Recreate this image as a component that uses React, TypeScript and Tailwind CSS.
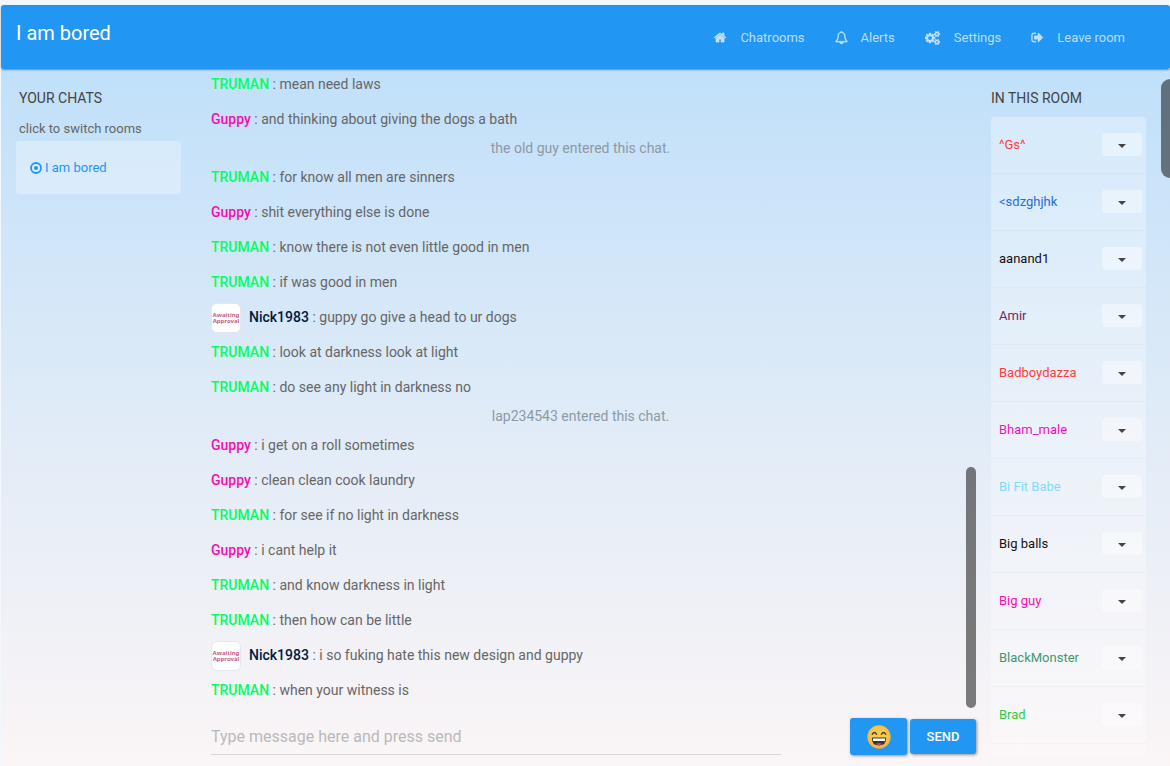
import type { ReactNode } from 'react';

type Message = { user?: 'TRUMAN' | 'Guppy' | 'Nick1983'; text: string };

const messages: Message[] = [
  { user: 'TRUMAN', text: 'mean need laws' },
  { user: 'Guppy', text: 'and thinking about giving the dogs a bath' },
  { text: 'the old guy entered this chat.' },
  { user: 'TRUMAN', text: 'for know all men are sinners' },
  { user: 'Guppy', text: 'shit everything else is done' },
  { user: 'TRUMAN', text: 'know there is not even little good in men' },
  { user: 'TRUMAN', text: 'if was good in men' },
  { user: 'Nick1983', text: 'guppy go give a head to ur dogs' },
  { user: 'TRUMAN', text: 'look at darkness look at light' },
  { user: 'TRUMAN', text: 'do see any light in darkness no' },
  { text: 'lap234543 entered this chat.' },
  { user: 'Guppy', text: 'i get on a roll sometimes' },
  { user: 'Guppy', text: 'clean clean cook laundry' },
  { user: 'TRUMAN', text: 'for see if no light in darkness' },
  { user: 'Guppy', text: 'i cant help it' },
  { user: 'TRUMAN', text: 'and know darkness in light' },
  { user: 'TRUMAN', text: 'then how can be little' },
  { user: 'Nick1983', text: 'i so fuking hate this new design and guppy' },
  { user: 'TRUMAN', text: 'when your witness is' },
];

const nameColors = {
  TRUMAN: 'text-[#00ff66]',
  Guppy: 'text-[#f80bb0]',
  Nick1983: 'text-[#001a40]',
};

const people = [
  { name: '^Gs^', color: 'text-[#ff3b3b]' },
  { name: '<sdzghjhk', color: 'text-[#1f6fd6]' },
  { name: 'aanand1', color: 'text-[#111111]' },
  { name: 'Amir', color: 'text-[#7a1f5c]' },
  { name: 'Badboydazza', color: 'text-[#ff3b3b]' },
  { name: 'Bham_male', color: 'text-[#f012be]' },
  { name: 'Bi Fit Babe', color: 'text-[#7fdbff]' },
  { name: 'Big balls', color: 'text-[#111111]' },
  { name: 'Big guy', color: 'text-[#f80bb0]' },
  { name: 'BlackMonster', color: 'text-[#3d9970]' },
  { name: 'Brad', color: 'text-[#2ecc40]' },
  { name: '', color: '' },
];

const smallCog =
  'v140q0 16-149 31-12 27-30 52 51 113 51 138 0 4-4 7-122 71-124 71-8 0-46-47t-52-68q-20 2-30 2t-30-2q-14 21-52 68t-46 47q-2 0-124-71-4-3-4-7 0-25 51-138-18-25-30-52-149-15-149-31v-140q0-16 149-31 13-29 30-52-51-113-51-138 0-4 4-7 4-2 35-20t59-34 30-16q8 0 46 46.5t52 67.5q20-2 30-2t30 2q51-71 92-112l6-2q4 0 124 70 4 3 4 7 0 25-51 138 17 23 30 52 149 15 149 31z';

const icons = {
  home: 'M1408 992v480q0 26-19 45t-45 19h-384v-384h-256v384h-384q-26 0-45-19t-19-45v-480q0-1 .5-3t.5-3l575-474 575 474q1 2 1 6zm223-69l-62 74q-8 9-21 11h-3q-13 0-21-7l-692-577-692 577q-12 8-24 7-13-2-21-11l-62-74q-8-10-7-23.5t11-21.5l719-599q32-26 76-26t76 26l244 204v-195q0-14 9-23t23-9h192q14 0 23 9t9 23v408l219 182q10 8 11 21.5t-7 23.5z',
  bell: 'M912 1696q0-16-16-16-59 0-101.5-42.5t-42.5-101.5q0-16-16-16t-16 16q0 73 51.5 124.5t124.5 51.5q16 0 16-16zm-666-288h1300q-266-300-266-832 0-51-24-105t-69-103-121.5-80.5-169.5-31.5-169.5 31.5-121.5 80.5-69 103-24 105q0 532-266 832zm1482 0q0 52-38 90t-90 38h-448q0 106-75 181t-181 75-181-75-75-181h-448q-52 0-90-38t-38-90q50-42 91-88t85-119.5 74.5-158.5 50-206 19.5-260q0-152 117-282.5t307-158.5q-8-19-8-39 0-40 28-68t68-28 68 28 28 68q0 20-8 39 190 28 307 158.5t117 282.5q0 139 19.5 260t50 206 74.5 158.5 85 119.5 91 88z',
  cogs:
    'M832 896q0-106-75-181t-181-75-181 75-75 181 75 181 181 75 181-75 75-181zm768 512q0-52-38-90t-90-38-90 38-38 90q0 53 37.5 90.5t90.5 37.5 90.5-37.5 37.5-90.5zm0-1024q0-52-38-90t-90-38-90 38-38 90q0 53 37.5 90.5t90.5 37.5 90.5-37.5 37.5-90.5zm-384 421v185q0 10-7 19.5t-16 10.5l-155 24q-11 35-32 76 34 48 90 115 7 11 7 20 0 12-7 19-23 30-82.5 89.5t-78.5 59.5q-11 0-21-7l-115-90q-37 19-77 31-11 108-23 155-7 24-30 24h-186q-11 0-20-7.5t-10-17.5l-23-153q-34-10-75-31l-118 89q-7 7-20 7-11 0-21-8-144-133-144-160 0-9 7-19 10-14 41-53t47-61q-23-44-35-82l-152-24q-10-1-17-9.5t-7-19.5v-185q0-10 7-19.5t16-10.5l155-24q11-35 32-76-34-48-90-115-7-11-7-20 0-12 7-20 22-30 82-89t79-59q11 0 21 7l115 90q34-18 77-32 11-108 23-154 7-24 30-24h186q11 0 20 7.5t10 17.5l23 153q34 10 75 31l118-89q8-7 20-7 11 0 21 8 144 133 144 160 0 8-7 19-12 16-42 54t-45 60q23 48 34 82l152 23q10 2 17 10.5t7 19.5zm640 533' +
    smallCog +
    'm0-1024' +
    smallCog,
  signOut:
    'M704 1440q0 4 1 20t.5 26.5-3 23.5-10 19.5-20.5 6.5h-320q-119 0-203.5-84.5t-84.5-203.5v-704q0-119 84.5-203.5t203.5-84.5h320q13 0 22.5 9.5t9.5 22.5q0 4 1 20t.5 26.5-3 23.5-10 19.5-20.5 6.5h-320q-66 0-113 47t-47 113v704q0 66 47 113t113 47h312l11.5 1 11.5 3 8 5.5 7 9 2 13.5zm928-544q0 26-19 45l-544 544q-19 19-45 19t-45-19-19-45v-288h-448q-26 0-45-19t-19-45v-384q0-26 19-45t45-19h448v-288q0-26 19-45t45-19 45 19l544 544q19 19 19 45z',
};

function NavLink({ icon, wide, children }: { icon: string; wide?: boolean; children: ReactNode }) {
  return (
    <a href="#" className="flex items-center gap-[13px] px-[15px] text-[13px] leading-5 text-white/70">
      <svg
        viewBox={wide ? '0 0 1920 1792' : '0 0 1792 1792'}
        className={wide ? 'h-[14px] w-4' : 'h-[13px] w-[13px]'}
        fill="currentColor"
        stroke="currentColor"
        strokeWidth="50"
        aria-hidden="true"
      >
        <path d={icon} />
      </svg>
      {children}
    </a>
  );
}

function Avatar() {
  return (
    <span className="mr-2 flex h-[30px] w-[30px] shrink-0 flex-col items-center justify-center rounded-md border border-gray-200 bg-white font-['Noto_Sans',sans-serif] text-[6px] leading-[6px] font-bold text-[#c0608a]">
      <span>Awaiting</span>
      <span>Approval</span>
    </span>
  );
}

function GrinEmoji() {
  return (
    <svg viewBox="0 0 24 24" className="h-6 w-6" aria-hidden="true">
      <defs>
        <radialGradient id="face" cx="0.5" cy="0.45" r="0.55">
          <stop offset="0.6" stopColor="#fdca47" />
          <stop offset="1" stopColor="#e9b03a" />
        </radialGradient>
      </defs>
      <circle cx="12" cy="12" r="11.7" fill="url(#face)" />
      <path d="M5.2 9.4Q7.4 5.6 9.6 9.4M14.4 9.4Q16.6 5.6 18.8 9.4" fill="none" stroke="#4b3f3a" strokeWidth="1.3" strokeLinecap="round" />
      <path d="M4.8 12.6H19.2Q19.4 20.6 12 20.6T4.8 12.6Z" fill="#3c3336" />
      <path d="M5.8 13.4H18.2Q18.2 15.8 17.6 16H6.4Q5.8 15.800 5.8 13.4Z" fill="#fff" />
      <path d="M8.8 19.2Q12 16.800 15.2 19.2Q12 20.800 8.8 19.2Z" fill="#d9425c" />
    </svg>
  );
}

export default function App() {
  return (
    <div className="flex h-screen flex-col bg-[#f3f8ff] pt-[5px] pl-px font-[Roboto,sans-serif] text-[#666666]">
      <header className="z-10 flex h-16 shrink-0 items-center justify-between rounded-[3px] bg-[#2196f3] pr-[30px] pl-[15px] shadow-[0_1px_2px_rgba(0,0,0,0.4)]">
        <h1 className="pb-2 text-xl leading-7 text-white">I am bored</h1>
        <nav className="flex pt-px">
          <NavLink icon={icons.home}>Chatrooms</NavLink>
          <NavLink icon={icons.bell}>Alerts</NavLink>
          <NavLink icon={icons.cogs} wide>Settings</NavLink>
          <NavLink icon={icons.signOut}>Leave room</NavLink>
        </nav>
      </header>

      <div className="flex min-h-0 flex-1 bg-linear-to-b from-[#c0e0fa] via-[#e0ebf7] to-[#fbf5f6]">
        <aside className="w-[180px] shrink-0 pt-[19px] pl-[15px]">
          <h2 className="pl-[3px] text-sm leading-5 text-[#444444]">YOUR CHATS</h2>
          <p className="mt-[11px] pl-[3px] text-[13px] leading-5">click to switch rooms</p>
          <a href="#" className="mt-[2px] flex h-[53px] items-center gap-[3px] rounded-[3px] bg-white/30 pl-[14px] text-[13px] text-[#2196f3]">
            <svg viewBox="0 0 12 12" className="h-3 w-3" aria-hidden="true">
              <circle cx="6" cy="6" r="5" fill="none" stroke="currentColor" strokeWidth="1.8" />
              <circle cx="6" cy="6" r="2" fill="currentColor" />
            </svg>
            I am bored
          </a>
        </aside>

        <main className="ml-[30px] flex min-w-0 flex-1 flex-col">
          <div className="flex min-h-0 flex-1">
            <ul className="flex min-w-0 flex-1 flex-col justify-end overflow-hidden text-sm">
              {messages.map((m, i) =>
                m.user ? (
                  <li key={i} className="flex h-[35px] shrink-0 items-center">
                    {m.user === 'Nick1983' && <Avatar />}
                    <p className="pb-[2px]">
                      <b className={`font-medium ${nameColors[m.user]}`}>{m.user}</b> : {m.text}
                    </p>
                  </li>
                ) : (
                  <li key={i} className="h-[23px] shrink-0 pr-4 text-center leading-[23px] text-[#8d99a5]">
                    {m.text}
                  </li>
                ),
              )}
            </ul>
            <div className="h-[241px] w-[10px] self-end rounded-full bg-black/50" />
          </div>

          <form className="flex h-[58px] shrink-0 items-start gap-[3px] pt-[10px]">
            <input
              type="text"
              aria-label="Message"
              placeholder="Type message here and press send"
              className="h-[37px] min-w-0 flex-1 border-b border-[#d8d5d8] bg-transparent text-base outline-none placeholder:text-[#b9b9bb]"
            />
            <button
              type="button"
              aria-label="Emoji"
              className="ml-[66px] flex h-[37px] w-[57px] items-center justify-center rounded-[3px] bg-[#2196f3] shadow-[1px_1px_3px_rgba(0,0,0,0.4)]"
            >
              <GrinEmoji />
            </button>
            <button
              type="submit"
              className="mt-px h-[35px] w-[66px] rounded-[3px] bg-[#2196f3] text-[13px] font-medium text-white shadow-[1px_1px_3px_rgba(0,0,0,0.4)]"
            >
              SEND
            </button>
          </form>
        </main>

        <aside className="ml-[15px] flex w-[155px] shrink-0 flex-col pt-[19px] pb-[9px]">
          <h2 className="text-sm leading-5 text-[#444444]">IN THIS ROOM</h2>
          <ul className="mt-[9px] min-h-0 flex-1 overflow-hidden rounded-t-[3px] bg-white/30">
            {people.map((p) => (
              <li key={p.name} className="flex h-[57px] items-center justify-between border-b border-[#5082b4]/5 pr-1 pb-px pl-2 text-[13px]">
                <a href="#" className={p.color}>
                  {p.name}
                </a>
                <button
                  type="button"
                  aria-label={`Options for ${p.name}`}
                  className="flex h-[23px] w-10 items-center justify-center rounded-[3px] bg-white/40"
                >
                  <svg viewBox="0 0 8 4" className="mt-[3px] h-1 w-2 fill-[#444444]" aria-hidden="true">
                    <path d="M0 0h8L4 4z" />
                  </svg>
                </button>
              </li>
            ))}
          </ul>
        </aside>
        <div className="mt-[10px] ml-[15px] h-[99px] w-[9px] shrink-0 rounded-l-full bg-black/50" />
      </div>
    </div>
  );
}
